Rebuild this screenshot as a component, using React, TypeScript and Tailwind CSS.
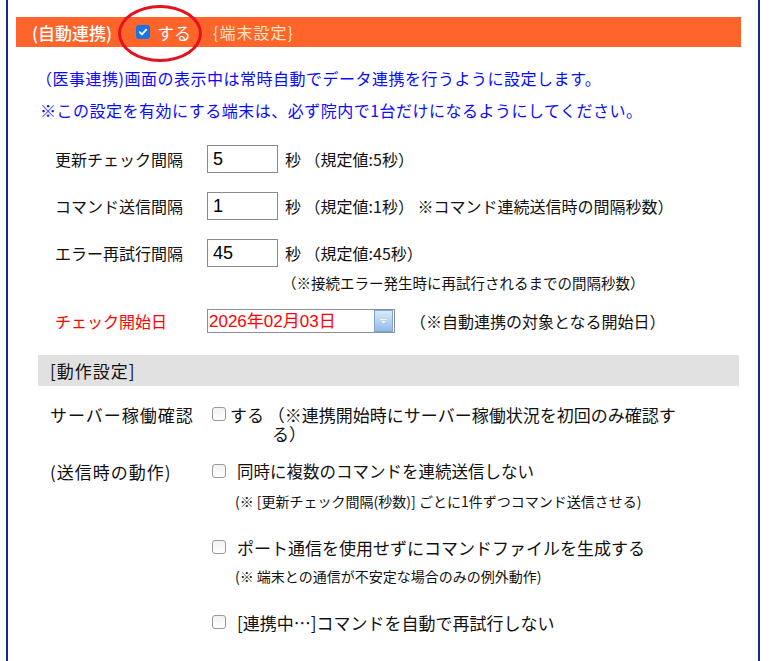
import React from "react";

function Box({ checked = false }: { checked?: boolean }) {
  if (checked) {
    return (
      <span className="inline-flex h-[14px] w-[14px] shrink-0 items-center justify-center rounded-[3px] bg-[#1976e0]">
        <svg width="10" height="10" viewBox="0 0 10 10">
          <path d="M1.8 5.2 L4 7.3 L8.3 2.6" fill="none" stroke="white" strokeWidth="1.8" strokeLinecap="round" strokeLinejoin="round" />
        </svg>
      </span>
    );
  }
  return (
    <span className="inline-block h-[14px] w-[14px] shrink-0 rounded-[3px] border border-[#9a9a9a] bg-gradient-to-b from-[#f2f2f2] to-white" />
  );
}

function NumRow({ label, value, after }: { label: string; value: string; after: string }) {
  return (
    <div className="flex h-[28px] items-center">
      <div className="w-[191px] shrink-0 whitespace-nowrap pl-[39px] text-[16px] leading-none text-[#111]">{label}</div>
      <div className="flex h-[28px] w-[71px] shrink-0 items-center border border-[#8a8a8a] pl-[5px] font-['Liberation_Sans',sans-serif] text-[18px] text-black">
        {value}
      </div>
      <div className="ml-[7px] whitespace-nowrap text-[16px] leading-none text-[#111]">{after}</div>
    </div>
  );
}

export default function App() {
  return (
    <div className="h-[661px] w-[782px] overflow-hidden bg-white font-['Noto_Sans_CJK_JP',sans-serif]">
      <div className="relative ml-[6px] h-[661px] w-[754px] border-x-2 border-[#142a8c] pl-[8px] pt-[17px]">
        {/* header bar */}
        <div className="relative flex h-[30px] w-[725px] items-center bg-[#ff642a] pl-[16px]">
          <span className="w-[104px] shrink-0 whitespace-nowrap text-[17px] font-medium leading-none text-white">(自動連携)</span>
          <Box checked />
          <span className="ml-[7px] text-[17px] leading-none text-white">する</span>
          <span className="ml-[22px] text-[16px] leading-none tracking-[1px] text-[#ffe3c2]">{"{端末設定}"}</span>
          <div className="pointer-events-none absolute left-[102px] top-[-12px] h-[57px] w-[84px] rounded-[50%] border-[3px] border-[#e4121e]" />
        </div>

        {/* blue info */}
        <div className="mt-[15px] pl-[24px] text-[16px] leading-[32px] tracking-[0.5px] text-[#0a0aff]">
          <div className="-ml-[4px]">（医事連携)画面の表示中は常時自動でデータ連携を行うように設定します。</div>
          <div>※この設定を有効にする端末は、必ず院内で1台だけになるようにしてください。</div>
        </div>

        {/* numeric rows */}
        <div className="mt-[19px] flex flex-col gap-[19px]">
          <NumRow label="更新チェック間隔" value="5" after="秒 （規定値:5秒）" />
          <NumRow label="コマンド送信間隔" value="1" after="秒 （規定値:1秒） ※コマンド連続送信時の間隔秒数）" />
          <NumRow label="エラー再試行間隔" value="45" after="秒 （規定値:45秒）" />
        </div>
        <div className="mt-[6px] pl-[266px] text-[14.5px] leading-[20px] text-[#111]">（※接続エラー発生時に再試行されるまでの間隔秒数）</div>

        {/* date row */}
        <div className="mt-[16px] flex h-[24px] items-center">
          <div className="w-[191px] shrink-0 whitespace-nowrap pl-[39px] text-[16px] leading-none text-[#ff0000]">チェック開始日</div>
          <div className="flex h-[24px] w-[188px] shrink-0 items-center border border-[#8f8f8f]">
            <span className="flex-1 pl-[1px] font-['Liberation_Sans','Noto_Sans_CJK_JP',sans-serif] text-[17px] leading-none text-[#ff0000]">2026年02月03日</span>
            <span className="mr-[1px] flex h-[22px] w-[19px] items-center justify-center border border-[#7ea6d6] bg-gradient-to-b from-[#dbe9f9] to-[#90bbe9]">
              <svg width="7" height="5" viewBox="0 0 7 5">
                <rect x="0" y="0" width="7" height="1" fill="#f5f8fc" />
                <path d="M1 2 H6 L3.5 4.5 Z" fill="#f5f8fc" />
              </svg>
            </span>
          </div>
          <div className="ml-[15px] whitespace-nowrap text-[16px] leading-none text-[#111]">（※自動連携の対象となる開始日）</div>
        </div>

        {/* gray section */}
        <div className="ml-[22px] mt-[22px] flex h-[31px] w-[701px] items-center bg-[#e1e1e1] pl-[12px] text-[17px] leading-none tracking-[1px] text-[#111]">
          [動作設定]
        </div>

        {/* server check */}
        <div className="mt-[18px] flex h-[20px] items-center">
          <div className="w-[196px] shrink-0 whitespace-nowrap pl-[34px] text-[17px] leading-none tracking-[1px] text-[#111]">サーバー稼働確認</div>
          <Box />
          <span className="ml-[4px] whitespace-nowrap text-[17px] leading-none text-[#111]">する （※連携開始時にサーバー稼働状況を初回のみ確認す</span>
        </div>
        <div className="h-[20px] pl-[256px] text-[17px] leading-[20px] text-[#111]">る）</div>

        {/* send behaviour */}
        <div className="mt-[17px] flex h-[20px] items-center">
          <div className="w-[196px] shrink-0 whitespace-nowrap pl-[34px] text-[17px] leading-none tracking-[1px] text-[#111]">(送信時の動作)</div>
          <Box />
          <span className="ml-[11px] whitespace-nowrap text-[16.5px] leading-none text-[#111]">同時に複数のコマンドを連続送信しない</span>
        </div>
        <div className="mt-[10px] h-[20px] whitespace-nowrap pl-[219px] text-[14px] leading-[20px] text-[#111]">(※ [更新チェック間隔(秒数)] ごとに1件ずつコマンド送信させる)</div>

        <div className="mt-[26px] flex h-[20px] items-center">
          <div className="w-[196px] shrink-0" />
          <Box />
          <span className="ml-[11px] whitespace-nowrap text-[17px] leading-none text-[#111]">ポート通信を使用せずにコマンドファイルを生成する</span>
        </div>
        <div className="mt-[9px] h-[20px] whitespace-nowrap pl-[219px] text-[14px] leading-[20px] text-[#111]">(※ 端末との通信が不安定な場合のみの例外動作)</div>

        <div className="mt-[26px] flex h-[20px] items-center">
          <div className="w-[196px] shrink-0" />
          <Box />
          <span className="ml-[11px] whitespace-nowrap text-[17px] leading-none text-[#111]">[連携中…]コマンドを自動で再試行しない</span>
        </div>
      </div>
    </div>
  );
}
